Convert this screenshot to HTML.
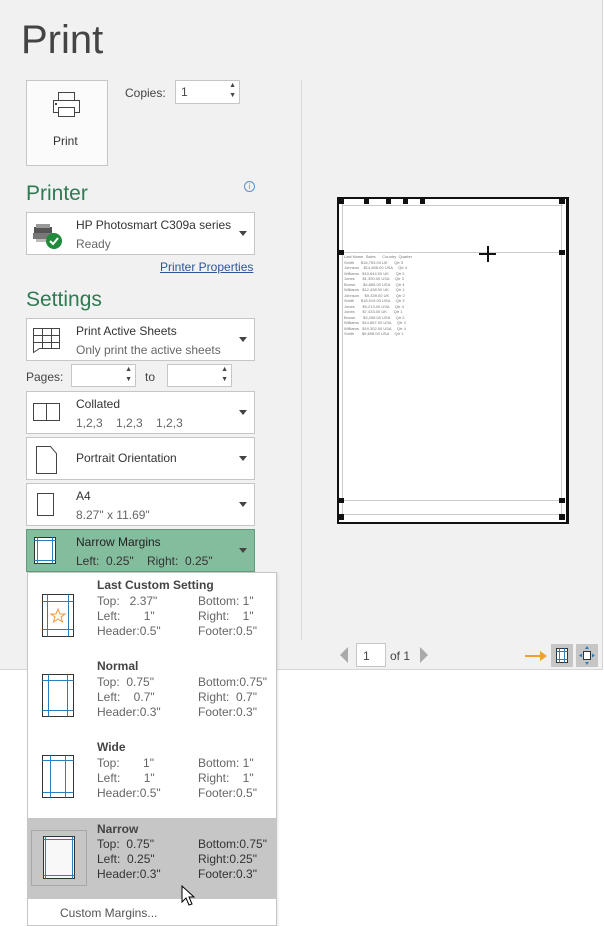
<!DOCTYPE html>
<html><head><style>
*{margin:0;padding:0;box-sizing:border-box}
body{width:604px;height:926px;position:relative;background:#fff;font-family:"Liberation Sans",sans-serif;font-size:12px;color:#444;overflow:hidden}
.a{position:absolute}
.bg{left:0;top:0;width:603px;height:670px;background:#f1f1f1;border-right:1px solid #d6d6d6;border-bottom:1px solid #d6d6d6}
.box{position:absolute;background:#fff;border:1px solid #c6c6c6}
.dd{left:26px;width:229px;height:43px}
.t1{position:absolute;left:49px;top:5px;color:#333}
.t2{position:absolute;left:49px;top:24px;color:#666}
.arr{position:absolute;right:7px;top:18px;width:0;height:0;border-left:4px solid transparent;border-right:4px solid transparent;border-top:5px solid #444}
.h{font-size:21px;color:#2f7a52}
.mi{position:absolute;left:0;width:249px}
.mi b{position:absolute;left:69px;color:#444;font-size:12px}
.mi span{position:absolute;color:#666;font-size:12px;line-height:15px;white-space:pre}
</style></head><body>
<div class="a bg"></div>
<div class="a" style="left:21px;top:18px;font-size:40px;color:#444;font-weight:300">Print</div>
<div class="box" style="left:26px;top:80px;width:82px;height:86px;background:#fbfbfb">
<svg class="a" style="left:25px;top:10px" width="30" height="32" viewBox="0 0 30 32"><rect x="6.5" y="1.5" width="16" height="8" fill="none" stroke="#444"/><rect x="1.5" y="9.5" width="26" height="12" fill="#fff" stroke="#444"/><rect x="6.5" y="16.5" width="16" height="9" fill="#fff" stroke="#444"/><rect x="3" y="12" width="2" height="2" fill="#444"/></svg>
<div class="a" style="left:26px;top:53px;color:#333">Print</div></div>
<div class="a" style="left:125px;top:86px;color:#444">Copies:</div>
<div class="box" style="left:175px;top:80px;width:65px;height:24px"><span class="a" style="left:5px;top:4px">1</span><span class="a" style="right:3px;top:1px;font-size:7px">▲</span><span class="a" style="right:3px;top:11px;font-size:7px">▼</span></div>
<div class="a" style="left:301px;top:80px;width:1px;height:560px;background:#d8d8d8"></div>
<div class="a h" style="left:26px;top:182px">Printer</div>
<div class="a" style="left:244px;top:181px;width:11px;height:11px;border:1px solid #5a8fc8;border-radius:50%;font-size:8px;color:#5a8fc8;text-align:center;line-height:9px">i</div>
<div class="box dd" style="top:212px">
<svg class="a" style="left:5px;top:10px" width="32" height="28"><rect x="2" y="4" width="18" height="6" fill="#555"/><rect x="4" y="1" width="14" height="4" fill="#999"/><rect x="1" y="10" width="20" height="6" fill="#777"/><rect x="4" y="16" width="10" height="3" fill="#bbb"/><circle cx="22" cy="18" r="8" fill="#1e8a3a"/><path d="M18 18 l3 3 l5 -6" stroke="#fff" stroke-width="2" fill="none"/></svg>
<div class="t1">HP Photosmart C309a series</div><div class="t2">Ready</div><div class="arr"></div></div>
<div class="a" style="left:160px;top:260px;color:#2b5797;text-decoration:underline">Printer Properties</div>
<div class="a h" style="left:26px;top:288px">Settings</div>
<div class="box dd" style="top:318px">
<svg class="a" style="left:5px;top:8px" width="30" height="28"><path d="M1.5 1.5h26v20h-20l-6 4z M1.5 8.5h26 M1.5 15.5h26 M10.5 1.5v20 M19.5 1.5v20" fill="none" stroke="#444"/></svg>
<div class="t1">Print Active Sheets</div><div class="t2">Only print the active sheets</div><div class="arr"></div></div>
<div class="a" style="left:26px;top:370px">Pages:</div>
<div class="box" style="left:71px;top:364px;width:65px;height:23px"><span class="a" style="right:3px;top:1px;font-size:7px">▲</span><span class="a" style="right:3px;top:11px;font-size:7px">▼</span></div>
<div class="a" style="left:145px;top:370px">to</div>
<div class="box" style="left:167px;top:364px;width:65px;height:23px"><span class="a" style="right:3px;top:1px;font-size:7px">▲</span><span class="a" style="right:3px;top:11px;font-size:7px">▼</span></div>
<div class="box dd" style="top:391px">
<svg class="a" style="left:5px;top:10px" width="30" height="22"><rect x="1.5" y="1.5" width="26" height="17" fill="none" stroke="#444"/><path d="M14.5 1.5v17" stroke="#444"/></svg>
<div class="t1">Collated</div><div class="t2">1,2,3&nbsp;&nbsp;&nbsp; 1,2,3&nbsp;&nbsp;&nbsp; 1,2,3</div><div class="arr"></div></div>
<div class="box dd" style="top:437px">
<svg class="a" style="left:8px;top:7px" width="24" height="30"><path d="M1.5 1.5h14l6 7v20h-20z" fill="none" stroke="#444"/></svg>
<div class="t1" style="top:13px">Portrait Orientation</div><div class="arr"></div></div>
<div class="box dd" style="top:483px">
<svg class="a" style="left:9px;top:8px" width="20" height="28"><rect x="1.5" y="1.5" width="16" height="22" fill="none" stroke="#444"/></svg>
<div class="t1">A4</div><div class="t2">8.27" x 11.69"</div><div class="arr"></div></div>
<div class="box dd" style="top:529px;background:#84bd9d;border-color:#5e9d78">
<svg class="a" style="left:6px;top:6px" width="24" height="30"><rect x="1.5" y="1.5" width="21" height="26" fill="#fff" stroke="#333"/><path d="M4.5 1.5v26 M19.5 1.5v26 M1.5 4.5h21 M1.5 24.5h21" stroke="#2a7fbf"/></svg>
<div class="t1" style="color:#222">Narrow Margins</div><div class="t2" style="color:#333">Left:&nbsp; 0.25"&nbsp;&nbsp;&nbsp; Right:&nbsp; 0.25"</div><div class="arr"></div></div>

<!-- preview -->
<div class="a" style="left:337px;top:197px;width:232px;height:327px;background:#fff;border:2px solid #111;border-right-width:3px"></div>
<div class="a" style="left:342px;top:205px;width:221px;height:1px;background:#ccc"></div>
<div class="a" style="left:342px;top:252px;width:221px;height:1px;background:#ccc"></div>
<div class="a" style="left:342px;top:500px;width:221px;height:1px;background:#ccc"></div>
<div class="a" style="left:342px;top:514px;width:221px;height:1px;background:#ccc"></div>
<div class="a" style="left:342px;top:200px;width:1px;height:320px;background:#ccc"></div>
<div class="a" style="left:561px;top:200px;width:1px;height:320px;background:#ccc"></div>
<div class="a" style="left:338px;top:198px;width:6px;height:6px;background:#111"></div>
<div class="a" style="left:364px;top:198px;width:5px;height:6px;background:#111"></div>
<div class="a" style="left:386px;top:198px;width:5px;height:6px;background:#111"></div>
<div class="a" style="left:403px;top:198px;width:5px;height:6px;background:#111"></div>
<div class="a" style="left:420px;top:198px;width:5px;height:6px;background:#111"></div>
<div class="a" style="left:559px;top:198px;width:6px;height:6px;background:#111"></div>
<div class="a" style="left:338px;top:250px;width:6px;height:5px;background:#111"></div>
<div class="a" style="left:559px;top:250px;width:6px;height:5px;background:#111"></div>
<div class="a" style="left:338px;top:498px;width:6px;height:5px;background:#111"></div>
<div class="a" style="left:559px;top:498px;width:6px;height:5px;background:#111"></div>
<div class="a" style="left:338px;top:514px;width:6px;height:6px;background:#111"></div>
<div class="a" style="left:559px;top:514px;width:6px;height:6px;background:#111"></div>
<div class="a" style="left:479px;top:253px;width:17px;height:2px;background:#111"></div>
<div class="a" style="left:487px;top:246px;width:2px;height:16px;background:#111"></div>
<div class="a" style="left:344px;top:254px;font-size:4px;line-height:5.5px;color:#777;white-space:pre">Last Name  Sales      Country  Quarter
Smith      $16,753.00 UK      Qtr 3
Johnson    $14,808.00 USA     Qtr 4
Williams   $10,644.00 UK      Qtr 2
Jones       $1,390.00 USA     Qtr 3
Brown       $4,865.00 USA     Qtr 4
Williams   $12,438.00 UK      Qtr 1
Johnson     $9,339.00 UK      Qtr 2
Smith      $18,919.00 USA     Qtr 3
Jones       $9,213.00 USA     Qtr 4
Jones       $7,433.00 UK      Qtr 1
Brown       $3,255.00 USA     Qtr 2
Williams   $14,867.00 USA     Qtr 3
Williams   $19,302.00 USA     Qtr 4
Smith       $9,698.00 USA     Qtr 1</div>

<div class="a" style="left:340px;top:647px;width:0;height:0;border-top:8px solid transparent;border-bottom:8px solid transparent;border-right:8px solid #aaa"></div>
<div class="box" style="left:356px;top:643px;width:30px;height:24px"><span class="a" style="left:6px;top:5px">1</span></div>
<div class="a" style="left:390px;top:649px;color:#444">of 1</div>
<div class="a" style="left:420px;top:647px;width:0;height:0;border-top:8px solid transparent;border-bottom:8px solid transparent;border-left:8px solid #aaa"></div>
<div class="a" style="left:525px;top:655px;width:17px;height:2px;background:#f0a030"></div>
<div class="a" style="left:540px;top:651px;width:0;height:0;border-top:5px solid transparent;border-bottom:5px solid transparent;border-left:7px solid #f0a030"></div>
<div class="a" style="left:551px;top:644px;width:22px;height:23px;background:#c6c6c6"><svg width="22" height="23"><rect x="5.5" y="4.5" width="11" height="14" fill="#fff" stroke="#333"/><path d="M8.5 4.5v14 M13.5 4.5v14 M5.5 7.5h11 M5.5 15.5h11" stroke="#2a7fbf"/></svg></div>
<div class="a" style="left:576px;top:644px;width:22px;height:23px;background:#c6c6c6"><svg width="22" height="23"><rect x="7.5" y="7.5" width="7" height="8" fill="#fff" stroke="#333"/><path d="M11 2l-2 3h4z M11 21l-2-3h4z M3 11.5l3-2v4z M19 11.5l-3-2v4z" fill="#2a7fbf"/></svg></div>

<!-- menu -->
<div class="a" style="left:27px;top:572px;width:250px;height:354px;background:#fff;border:1px solid #c6c6c6;box-shadow:1px 1px 2px rgba(0,0,0,.1)">
 <div class="mi" style="top:5px;height:72px">
  <svg class="a" style="left:13px;top:15px" width="34" height="46"><rect x="1.5" y="1.5" width="31" height="42" fill="#fff" stroke="#333"/><path d="M6.5 1.5v42 M27.5 1.5v42 M1.5 8.5h31 M1.5 36.5h31" stroke="#2a7fbf"/><path d="M17 16l2 5h5l-4 3 1.5 5-4.5-3-4.5 3 1.5-5-4-3h5z" fill="none" stroke="#f0963a"/></svg>
  <b style="top:0">Last Custom Setting</b>
  <span style="left:69px;top:16px">Top:   2.37"
Left:       1"
Header:0.5"</span>
  <span style="left:170px;top:16px">Bottom: 1"
Right:    1"
Footer:0.5"</span></div>
 <div class="mi" style="top:86px;height:72px">
  <svg class="a" style="left:13px;top:14px" width="34" height="46"><rect x="1.5" y="1.5" width="31" height="42" fill="#fff" stroke="#333"/><path d="M7.5 1.5v42 M26.5 1.5v42 M1.5 7.5h31 M1.5 37.5h31" stroke="#2a7fbf"/></svg>
  <b style="top:0">Normal</b>
  <span style="left:69px;top:16px">Top:  0.75"
Left:    0.7"
Header:0.3"</span>
  <span style="left:170px;top:16px">Bottom:0.75"
Right:  0.7"
Footer:0.3"</span></div>
 <div class="mi" style="top:167px;height:72px">
  <svg class="a" style="left:13px;top:14px" width="34" height="46"><rect x="1.5" y="1.5" width="31" height="42" fill="#fff" stroke="#333"/><path d="M9.5 1.5v42 M24.5 1.5v42 M1.5 6.5h31 M1.5 38.5h31" stroke="#2a7fbf"/></svg>
  <b style="top:0">Wide</b>
  <span style="left:69px;top:16px">Top:       1"
Left:       1"
Header:0.5"</span>
  <span style="left:170px;top:16px">Bottom: 1"
Right:    1"
Footer:0.5"</span></div>
 <div class="mi" style="top:245px;height:81px;background:#c6c6c6">
  <div class="a" style="left:3px;top:12px;width:56px;height:56px;border:1px solid #a8a8a8"></div>
  <svg class="a" style="left:14px;top:17px" width="34" height="46"><rect x="1.5" y="1.5" width="31" height="42" fill="#f8f8f8" stroke="#333"/><path d="M3.5 1.5v42 M30.5 1.5v42 M1.5 4.5h31 M1.5 40.5h31" stroke="#2a7fbf"/></svg>
  <b style="top:4px">Narrow</b>
  <span style="left:69px;top:19px;color:#333">Top:  0.75"
Left:  0.25"
Header:0.3"</span>
  <span style="left:170px;top:19px;color:#333">Bottom:0.75"
Right:0.25"
Footer:0.3"</span></div>
 <div class="a" style="left:32px;top:333px;color:#555">Custom Margins...</div>
</div>
<svg class="a" style="left:181px;top:885px" width="14" height="22"><path d="M1 1v16l4-4 3 7 3-1-3-7h5z" fill="#fff" stroke="#000"/></svg>
</body></html>
